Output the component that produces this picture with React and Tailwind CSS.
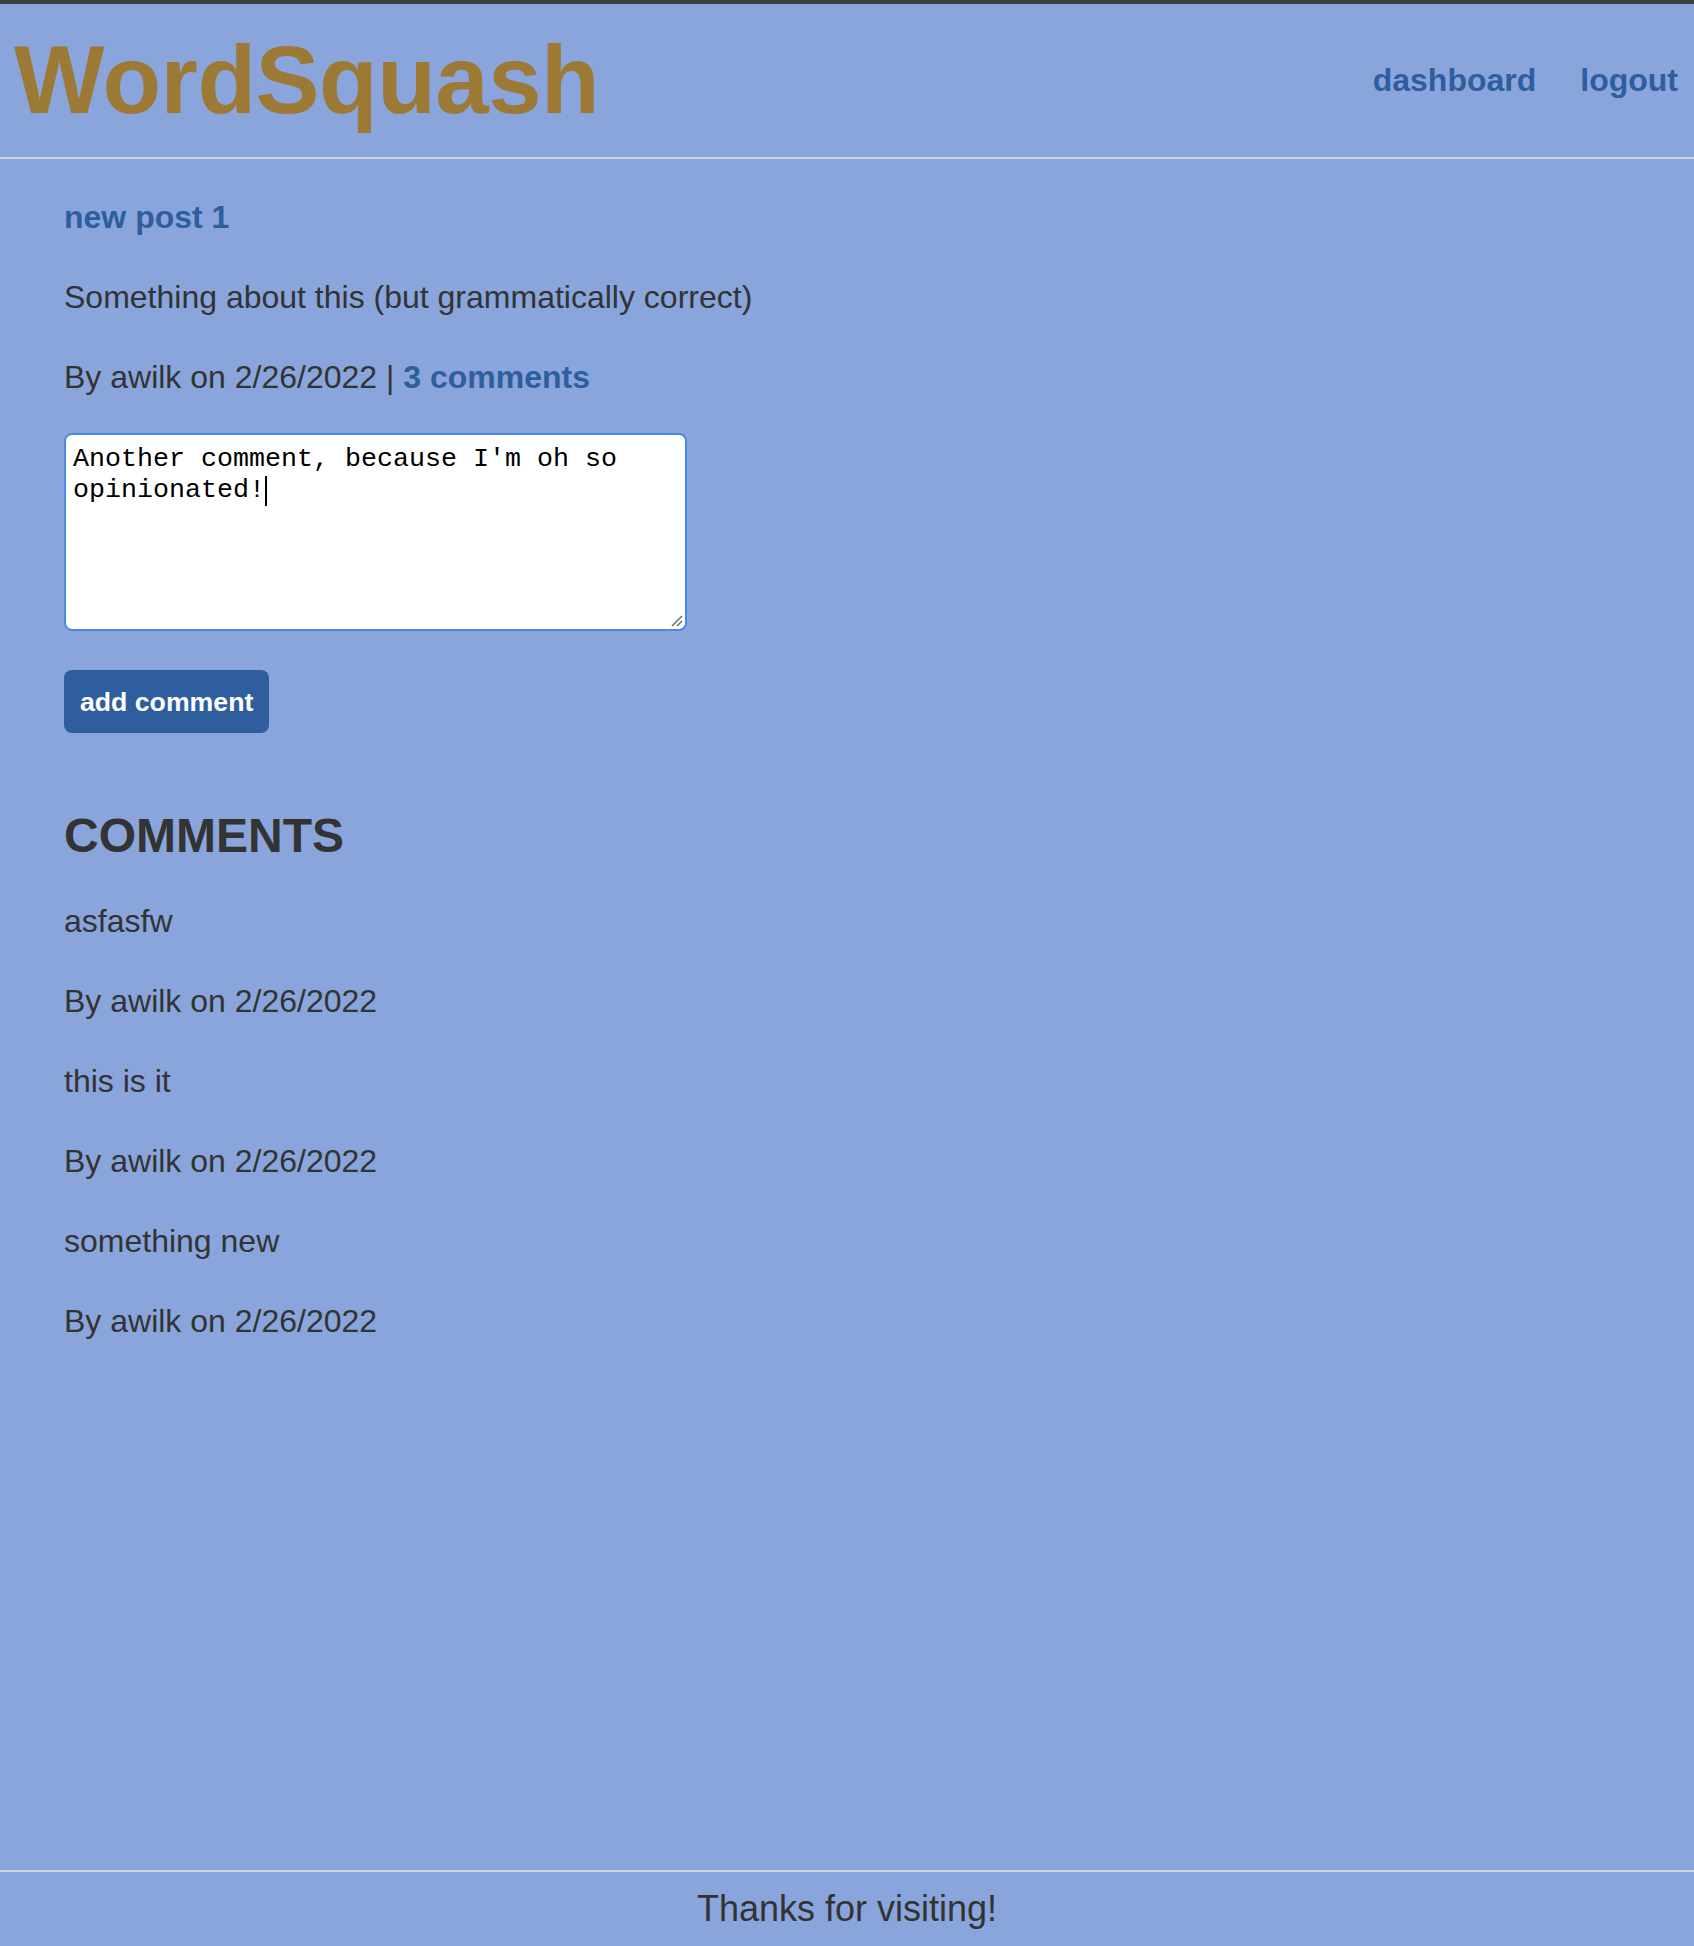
import React from 'react';

const comments = [
  { text: 'asfasfw', author: 'awilk', date: '2/26/2022' },
  { text: 'this is it', author: 'awilk', date: '2/26/2022' },
  { text: 'something new', author: 'awilk', date: '2/26/2022' },
];

export default function App() {
  return (
    <div className="min-h-[1946px] flex flex-col bg-[#89a5db] text-[#333333] border-t-4 border-[#3d3d3d] font-['Liberation_Sans',Arial,sans-serif]">
      {/* Header */}
      <header className="h-[155px] flex justify-between items-start border-b-2 border-[#d2d6df] pl-[14px] pr-[16px]">
        <h1 className="mt-[28px] text-[96px] leading-none font-bold tracking-[-0.5px] text-[#9c7a35]">WordSquash</h1>
        <nav className="mt-[60px] flex gap-[44px] text-[32px] leading-none font-bold text-[#2f5e9e]">
          <a href="#">dashboard</a>
          <a href="#">logout</a>
        </nav>
      </header>

      {/* Post */}
      <main className="flex-1 px-[64px] pt-[34px]">
        <div className="flex flex-col gap-[32px] text-[32px] leading-[48px]">
          <a href="#" className="font-bold text-[#2f5e9e]">new post 1</a>
          <p>Something about this (but grammatically correct)</p>
          <p>
            By awilk on 2/26/2022 | <a href="#" className="font-bold text-[#2f5e9e]">3 comments</a>
          </p>
        </div>

        <div className="relative mt-[32px] w-[623px] h-[198px] bg-white border-2 border-[#4a8ae0] rounded-lg pt-[9px] px-[7px] text-black text-[26.67px] leading-[31px] font-['Liberation_Mono','Courier_New',monospace]">
          <div>Another comment, because I'm oh so</div>
          <div className="flex items-center">
            opinionated!<span className="inline-block w-[2px] h-[30px] bg-black" />
          </div>
          <svg className="absolute right-[2px] bottom-[2px]" width="14" height="14" viewBox="0 0 14 14">
            <path d="M13 3 L3 13 M13 8 L8 13" stroke="#6b6b6b" strokeWidth="1.5" />
          </svg>
        </div>

        <button className="mt-[39px] h-[63px] px-[16px] flex items-center rounded-[8px] bg-[#2f5e9e] text-white font-bold text-[26.67px]">
          add comment
        </button>

        {/* Comments */}
        <h2 className="mt-[79px] text-[48px] leading-[48px] font-bold">COMMENTS</h2>
        <div className="mt-[37px] flex flex-col gap-[32px] text-[32px] leading-[48px]">
          {comments.map((c, i) => (
            <React.Fragment key={i}>
              <p>{c.text}</p>
              <p>By {c.author} on {c.date}</p>
            </React.Fragment>
          ))}
        </div>
      </main>

      {/* Footer */}
      <footer className="h-[76px] border-t-2 border-[#d2d6df] flex items-center justify-center">
        <span className="text-[36px] leading-none">Thanks for visiting!</span>
      </footer>
    </div>
  );
}
